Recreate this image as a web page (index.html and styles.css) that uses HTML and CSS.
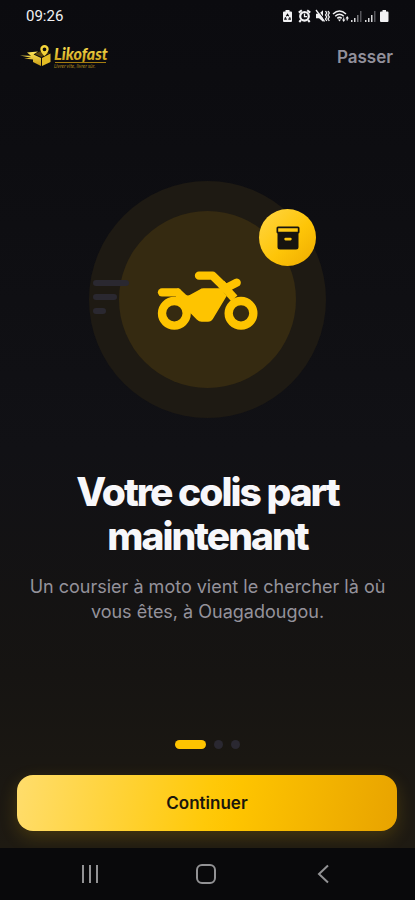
FILE: index.html
```html
<!DOCTYPE html>
<html lang="fr">
<head>
<meta charset="utf-8">
<meta name="viewport" content="width=device-width, initial-scale=1">
<title>Likofast</title>
<link rel="stylesheet" href="styles.css">
</head>
<body>
<div class="app">
  <div class="status">
    <time class="clock">09:26</time>
    <svg class="status-icons" width="108" height="14" viewBox="0 0 108 14" aria-hidden="true">
      <path fill="#f1f1f3" d="M3.500 1h4v1.500H9q1 0 1 1V12q0 1-1 1H2q-1 0-1-1V3.500q0-1 1-1h1.500z"/>
      <path fill="none" stroke="#0b0b0f" stroke-width="1.200" d="M4.300 7.200L5.500 5.300l1.200 1.900M7.600 8.300l.6 1.800H6.300M4.800 10.100H2.900l.7-1.800"/>
      <circle cx="22.500" cy="7.300" r="4.300" fill="none" stroke="#f1f1f3" stroke-width="2.200"/>
      <path fill="none" stroke="#f1f1f3" stroke-width="1.300" d="M22.500 4.500v3.200H25"/>
      <path fill="none" stroke="#f1f1f3" stroke-width="2" d="M16.800 3.600l3-2.400M28.200 3.600l-3-2.400M19 11l-1.700 2M26 11l1.700 2"/>
      <path fill="#f1f1f3" d="M34 4.800h3l4-3.600v11.600l-4-3.600h-3z"/>
      <path fill="none" stroke="#0b0b0f" stroke-width="1.200" d="M35.500 1l7.500 10"/>
      <path fill="none" stroke="#f1f1f3" stroke-width="1.300" d="M34 1l8.500 11.500"/>
      <path fill="none" stroke="#f1f1f3" stroke-width="1.300" d="M43.500 2l1.300 2-1.300 2 1.300 2-1.300 2 1.300 2M46 2l1.300 2L46 6l1.300 2L46 10l1.300 2"/>
      <path fill="none" stroke="#f1f1f3" stroke-width="1.500" d="M51 5q6.500-6 13 0M53.200 7.200q4.300-4 8.600 0M55.300 9.400q2.200-2 4.400 0"/>
      <path fill="#f1f1f3" d="M56 10.500h3L57.500 12.500zM60 10.500h1.200V8.500h1v2h1.200l-1.700 2.500zM63.500 9.500L65.200 7 67 9.500h-1.200v2h-1.200v-2z"/>
      <path fill="#d9d9db" d="M69 11h1.500v2H69zM72 9h1.500v4H72zM83 11h1.500v2H83zM86 9h1.500v4H86zM89 6h1.500v7H89z"/>
      <path fill="#77777b" d="M75 6h1.500v7H75z"/>
      <path fill="#55555a" d="M78 2h1.500v11H78zM92 2h1.500v11H92z"/>
      <path fill="#f1f1f3" d="M100.500 1h3.500v1.500h1.500q1 0 1 1V12q0 1-1 1h-6.500q-1 0-1-1V3.500q0-1 1-1h1.500z"/>
    </svg>
  </div>

  <header class="top">
    <svg class="logo" width="92" height="28" viewBox="0 0 92 28" role="img" aria-label="Likofast">
      <defs><linearGradient id="gold" x1="0" y1="0" x2="0" y2="1"><stop offset="0" stop-color="#ffe75a"/><stop offset="1" stop-color="#c79a12"/></linearGradient></defs>
      <path fill="url(#gold)" d="M7 9.500l11-1-4.500 3 7.500 3.500v8l-8-4v-2.500L4 15.500l7-.7L0 12.500l11 .3z"/>
      <path fill="#e3bc24" d="M22 15l8.500-4.500V19L22 23z"/>
      <path fill="#5a450c" d="M14.500 11L20 8.500l9.500 1.500-8 4z"/>
      <path fill="#f4d43a" fill-rule="evenodd" d="M24.500 2a4.200 4.200 0 0 1 4.200 4.200C28.700 9 24.500 13 24.500 13s-4.200-4-4.200-6.800A4.200 4.200 0 0 1 24.500 2zm0 2.400a1.900 1.900 0 1 0 0 3.800 1.900 1.900 0 0 0 0-3.800z"/>
      <text class="logo-name" x="34" y="17" fill="url(#gold)">Likofast</text>
      <path fill="#a57d10" d="M35 19h51v1H35z"/>
      <text class="logo-tag" x="34" y="25">Livrer vite, livrer sûr.</text>
    </svg>
    <button class="skip" type="button">Passer</button>
  </header>

  <main class="content">
    <div class="hero">
      <div class="disc">
        <svg class="moto" width="101" height="60" viewBox="36 28 303 180" aria-hidden="true">
          <g fill="none" stroke="#fec400" stroke-width="25" stroke-linecap="round" stroke-linejoin="round">
            <circle cx="88" cy="158" r="37"/><circle cx="288" cy="158" r="37"/>
            <path d="M51 95h46"/><path d="M162 45h41l37 36"/><path d="M240 84l35-18"/>
            <path d="M228 69l40 44" stroke-linecap="butt"/>
          </g>
          <path fill="#fec400" d="M97 83q6 0 10 4l16 15q5 4 11 1l29-16q6-4 13-4h50l19 23-41 68q-5 9-15 9h-19q-8 0-14-6l-20-20-26-33-18-13z"/>
        </svg>
      </div>
      <div class="speed" aria-hidden="true"><i class="long"></i><i class="mid"></i><i class="short"></i></div>
      <div class="badge">
        <svg width="24" height="24" viewBox="0 0 24 24" aria-hidden="true">
          <path fill="#17140f" fill-rule="evenodd" d="M2 .5h20q1.500 0 1.500 1.500v4q0 1.200-1 1.500V21q0 2.500-2.500 2.500H4Q1.500 23.500 1.500 21V7.500Q.5 7.200.5 6V2Q.5.500 2 .5zm.200 1.800v3.500h19.600V2.300zM9.500 11.800q-1.200 0-1.200 1.300t1.200 1.300h5q1.200 0 1.200-1.300t-1.200-1.300z"/>
        </svg>
      </div>
    </div>
    <h1 class="title">Votre colis part maintenant</h1>
    <p class="lead">Un coursier à moto vient le chercher là où vous êtes, à Ouagadougou.</p>
  </main>

  <footer class="actions">
    <div class="dots" aria-hidden="true"><i class="dot active"></i><i class="dot"></i><i class="dot"></i></div>
    <button class="next" type="button">Continuer</button>
  </footer>

  <nav class="navbar">
    <button type="button" aria-label="Applications récentes"><svg width="20" height="20" viewBox="0 0 20 20"><path fill="none" stroke="#929294" stroke-width="2" d="M3 1v18M10 1v18M17 1v18"/></svg></button>
    <button type="button" aria-label="Accueil"><svg width="20" height="20" viewBox="0 0 20 20"><rect x="1" y="1" width="18" height="18" rx="5" fill="none" stroke="#929294" stroke-width="2"/></svg></button>
    <button type="button" aria-label="Retour"><svg width="20" height="20" viewBox="0 0 20 20"><path fill="none" stroke="#929294" stroke-width="2" d="M15 1.500L6 10l9 8.500"/></svg></button>
  </nav>
</div>
</body>
</html>
```
FILE: styles.css
```css
* { box-sizing: border-box; }
body { margin: 0; background: #0b0b0f; font-family: Inter, "Liberation Sans", sans-serif; }
button { border: 0; padding: 0; background: none; font: inherit; cursor: pointer; }
svg { display: block; }

.app {
  min-height: 100vh;
  display: flex;
  flex-direction: column;
  background: linear-gradient(#0b0b0f 0%, #111115 50%, #161412 75%, #1e1a12 94%);
}

.status {
  height: 32px;
  padding: 0 25px 0 26px;
  display: flex;
  align-items: center;
  justify-content: space-between;
}
.clock { font: 400 15px/20px Roboto, sans-serif; color: #f1f1f3; }

.top {
  height: 50px;
  padding: 0 22px 0 20px;
  display: flex;
  align-items: center;
  justify-content: space-between;
}
.logo-name { font: italic 900 16px Lato, sans-serif; }
.logo-tag { font: italic 400 5px Lato, sans-serif; fill: #a8841c; }
.skip { font-size: 17px; line-height: 24px; font-weight: 600; color: #92909b; }

.content {
  flex: 1;
  padding: 0 24px 17px;
  display: flex;
  flex-direction: column;
  align-items: center;
  justify-content: center;
  text-align: center;
}
.hero {
  position: relative;
  width: 237px;
  height: 237px;
  border-radius: 50%;
  display: grid;
  place-items: center;
  background: #1e1a13;
}
.disc {
  width: 177px;
  height: 177px;
  border-radius: 50%;
  display: grid;
  place-items: center;
  background: #352a11;
}
.speed {
  position: absolute;
  left: 4px;
  top: 99px;
  display: grid;
  gap: 8px;
}
.speed i { height: 6px; border-radius: 3px; background: #2a2830; }
.speed .long { width: 36px; }
.speed .mid { width: 24px; }
.speed .short { width: 13px; }
.badge {
  position: absolute;
  right: 10px;
  top: 28px;
  width: 57px;
  height: 57px;
  border-radius: 50%;
  display: grid;
  place-items: center;
  background: linear-gradient(135deg, #ffd645, #fec508 55%, #eeab00);
}
.title {
  margin: 52px 0 0;
  max-width: 320px;
  font-size: 39px;
  line-height: 44px;
  font-weight: 800;
  letter-spacing: -2px;
  color: #f7f7fa;
}
.lead {
  margin: 16px 0 0;
  font-size: 18px;
  line-height: 25px;
  color: #94929b;
}

.actions { padding: 0 18px 17px 17px; }
.dots { display: flex; justify-content: center; gap: 8px; margin-bottom: 26px; }
.dot { width: 9px; height: 9px; border-radius: 5px; background: #2a2831; }
.dot.active { width: 31px; background: #fec400; }
.next {
  width: 100%;
  height: 56px;
  border-radius: 16px;
  font-size: 17px;
  font-weight: 600;
  color: #1b160c;
  background: linear-gradient(100deg, #ffdd6c 0%, #ffc909 50%, #fec400 58%, #e8a300 100%);
  box-shadow: 0 6px 18px rgba(254, 196, 0, 0.18);
}

.navbar {
  position: relative;
  height: 52px;
  padding: 0 34px 0 32px;
  display: grid;
  grid-template-columns: repeat(3, 1fr);
  place-items: center;
  background: #09090b;
}
```
